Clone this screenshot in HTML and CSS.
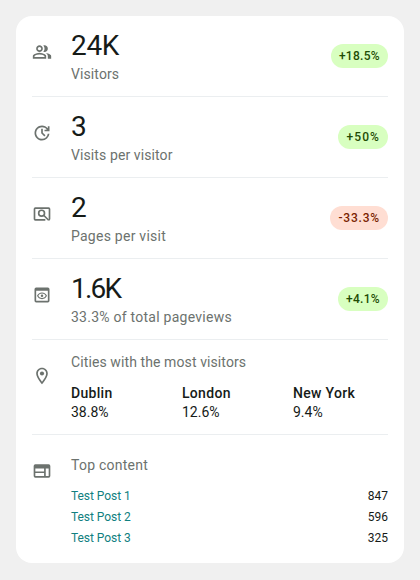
FILE: index.html
```html
<!DOCTYPE html>
<html lang="en">
<head>
<meta charset="utf-8">
<title>Site stats</title>
<link rel="stylesheet" href="styles.css">
</head>
<body>
<main class="card">
  <section class="row">
    <svg class="icon" viewBox="0 -960 960 960"><path d="M40-160v-112q0-34 17.5-62.5T104-378q62-31 126-46.5T360-440q66 0 130 15.5T616-378q29 15 46.5 43.5T680-272v112H40Zm720 0v-120q0-44-24.5-84.5T666-434q51 6 96 20.5t84 35.5q36 20 55 44.5t19 53.5v120H760ZM360-480q-66 0-113-47t-47-113q0-66 47-113t113-47q66 0 113 47t47 113q0 66-47 113t-113 47Zm400-160q0 66-47 113t-113 47q-11 0-28-2.5t-28-5.5q27-32 41.5-71t14.5-81q0-42-14.5-81T544-792q14-5 28-6.5t28-1.5q66 0 113 47t47 113ZM120-240h480v-32q0-11-5.5-20T580-306q-54-27-109-40.5T360-360q-56 0-111 13.5T140-306q-9 5-14.5 14t-5.5 20v32Zm240-320q33 0 56.5-23.5T440-640q0-33-23.5-56.5T360-720q-33 0-56.5 23.5T280-640q0 33 23.5 56.5T360-560Z"/></svg>
    <div class="metric"><div class="value">24K</div><div class="label">Visitors</div></div>
    <span class="badge up">+18.5%</span>
  </section>
  <section class="row">
    <svg class="icon" viewBox="0 -960 960 960"><path d="M480-120q-75 0-140.5-28.5t-114-77q-48.5-48.5-77-114T120-480q0-75 28.5-140.5t77-114q48.5-48.5 114-77T480-840q82 0 155.5 35T760-706v-94h80v240H600v-80h110q-41-56-101-88t-129-32q-117 0-198.5 81.5T200-480q0 117 81.5 198.5T480-200q105 0 183.5-68T756-440h82q-15 137-117.5 228.5T480-120Zm112-192L440-464v-216h80v184l128 128-56 56Z"/></svg>
    <div class="metric"><div class="value">3</div><div class="label">Visits per visitor</div></div>
    <span class="badge up wide">+50%</span>
  </section>
  <section class="row">
    <svg class="icon line" viewBox="0 0 24 24"><path d="M16 19H4a1 1 0 0 1-1-1V6a1 1 0 0 1 1-1h16a1 1 0 0 1 1 1v12a1 1 0 0 1-1 1"/><circle cx="11.5" cy="11" r="3.5"/><path d="M14 13.500l6 6"/></svg>
    <div class="metric"><div class="value">2</div><div class="label looser">Pages per visit</div></div>
    <span class="badge down">-33.3%</span>
  </section>
  <section class="row">
    <svg class="icon" viewBox="0 0 24 24"><path fill-rule="evenodd" d="M5 3h14a2 2 0 0 1 2 2v14a2 2 0 0 1-2 2H5a2 2 0 0 1-2-2V5a2 2 0 0 1 2-2ZM5 7v12h14V7ZM12 9c2.73 0 5.06 1.66 6 4-.94 2.34-3.27 4-6 4s-5.06-1.66-6-4c.94-2.34 3.27-4 6-4Zm0 1.3c-1.9 0-3.5 1-4.4 2.7.9 1.7 2.5 2.7 4.4 2.7s3.5-1 4.4-2.7c-.9-1.7-2.5-2.7-4.4-2.7Z"/><circle cx="12" cy="13" r="1.5"/></svg>
    <div class="metric"><div class="value tight">1.6K</div><div class="label looser">33.3% of total pageviews</div></div>
    <span class="badge up">+4.1%</span>
  </section>
  <section class="row cities">
    <svg class="icon" viewBox="0 0 24 24"><path fill-rule="evenodd" d="M12 2C8.130 2 5 5.130 5 9c0 5.250 7 13 7 13s7-7.750 7-13c0-3.870-3.130-7-7-7ZM7 9c0-2.760 2.240-5 5-5s5 2.240 5 5c0 2.880-2.880 7.190-5 9.880C9.920 16.210 7 11.850 7 9Z"/><circle cx="12" cy="9" r="2.500"/></svg>
    <div class="detail">
      <div class="label">Cities with the most visitors</div>
      <div class="city-list">
        <div><b>Dublin</b><span>38.8%</span></div>
        <div><b>London</b><span>12.6%</span></div>
        <div><b>New York</b><span>9.4%</span></div>
      </div>
    </div>
  </section>
  <section class="row content">
    <svg class="icon" viewBox="0 0 24 24"><path fill-rule="evenodd" d="M4 4h16a2 2 0 0 1 2 2v12a2 2 0 0 1-2 2H4a2 2 0 0 1-2-2V6a2 2 0 0 1 2-2ZM4 9v3.500h10.500V9ZM4 14.500V18h10.500v-3.500ZM16.500 9v9H20V9Z"/></svg>
    <div class="detail">
      <div class="label looser">Top content</div>
      <div class="posts">
        <div class="post"><a>Test Post 1</a><span>847</span></div>
        <div class="post"><a>Test Post 2</a><span>596</span></div>
        <div class="post"><a>Test Post 3</a><span>325</span></div>
      </div>
    </div>
  </section>
</main>
</body>
</html>
```
FILE: styles.css
```css
* { box-sizing: border-box; }
body {
  margin: 0;
  padding: 16px;
  background: #f0f0f0;
  color: #161b18;
  font-family: Roboto, "Liberation Sans", sans-serif;
}
.card {
  height: 547px;
  padding: 0 16px;
  background: #fff;
  border-radius: 16px;
}
.row {
  display: flex;
  align-items: flex-start;
  height: 81px;
  border-bottom: 1px solid #ebeef0;
}
.icon {
  flex: none;
  width: 20px;
  height: 20px;
  margin: 26px 19px 0 0;
  fill: #6c726e;
}
.line { fill: none; stroke: #6c726e; stroke-width: 2; }
.metric { flex: 1; padding-top: 12px; }
.value { font-size: 28px; line-height: 36px; letter-spacing: -0.3px; }
.tight { letter-spacing: -1.8px; }
.label {
  color: #6c726e;
  font-size: 14px;
  line-height: 20px;
  letter-spacing: 0.1px;
}
.looser { letter-spacing: 0.25px; }
.badge {
  height: 24px;
  margin-top: 28px;
  padding: 0 8px;
  border-radius: 12px;
  font-size: 12px;
  font-weight: 500;
  line-height: 24px;
  letter-spacing: 0.3px;
}
.wide { letter-spacing: 1.1px; }
.up { background: #d8ffc0; color: #1f4c04; }
.down { background: #ffded3; color: #7a1e00; letter-spacing: 0.8px; }
.detail { flex: 1; }
.cities { height: 95px; }
.cities .detail { padding-top: 12px; }
.city-list {
  display: grid;
  grid-template-columns: repeat(3, 111px);
  width: 317px;
  margin-top: 12px;
  font-size: 14px;
  line-height: 19px;
}
.city-list b, .city-list span { display: block; }
.city-list b { font-weight: 500; letter-spacing: 0.3px; }
.content { height: 128px; border-bottom: 0; }
.content .detail { padding-top: 20px; }
.posts { margin-top: 11px; font-size: 12px; line-height: 21px; }
.post { display: flex; justify-content: space-between; }
.post a { color: #108080; letter-spacing: -0.05px; }
```
